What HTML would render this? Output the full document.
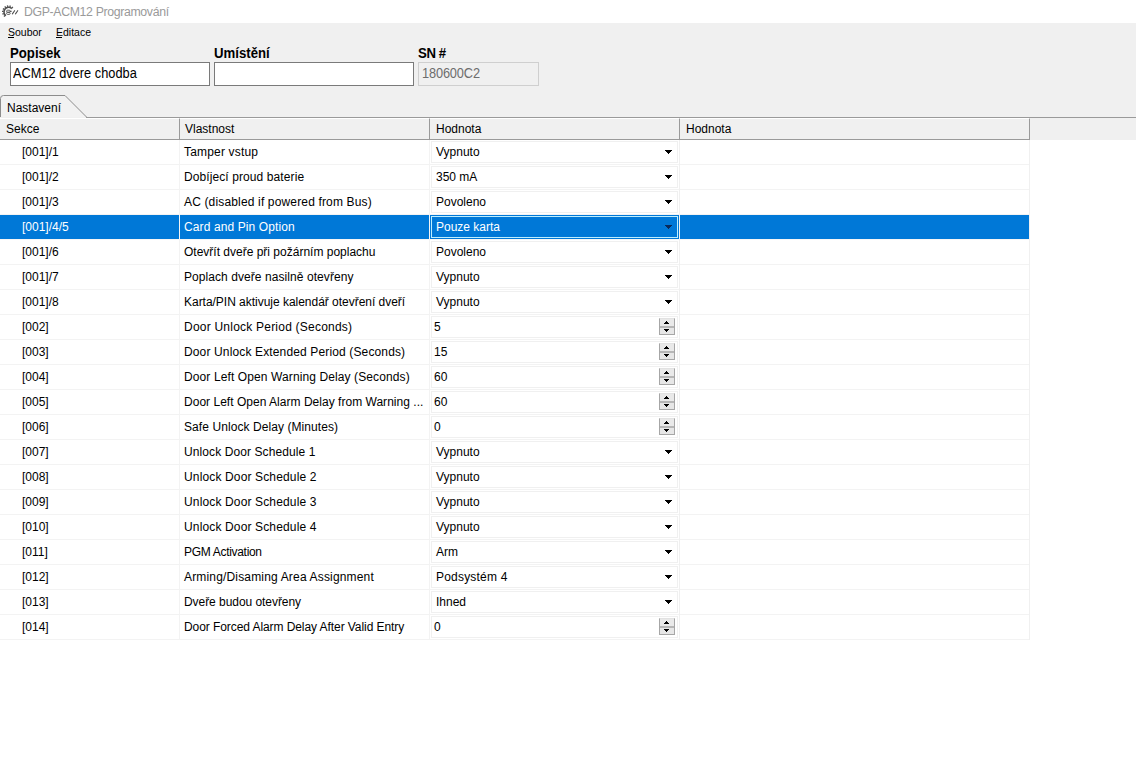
<!DOCTYPE html>
<html><head><meta charset="utf-8"><style>
*{margin:0;padding:0;box-sizing:border-box}
html,body{width:1136px;height:783px;overflow:hidden;background:#fff;font-family:"Liberation Sans",sans-serif;font-size:12px;color:#000;position:relative}
span{position:absolute;white-space:nowrap;line-height:14px}
i{position:absolute;display:block}
.title{position:absolute;left:0;top:0;width:1136px;height:23px;background:#fff}
.logo{position:absolute;left:0;top:0}
.ttxt{left:24px;top:5px;font-size:12.3px;letter-spacing:-0.35px;color:#9a9a9a}
.band{position:absolute;left:0;top:23px;width:1136px;height:95px;background:#f0f0f0}
.mi{top:25px;font-size:10.5px}
.mi u{text-decoration:none}
.ul{position:absolute;top:37px;height:1px;background:#000}
.m1{left:8px}.m2{left:56px}
.lbl{top:46px;font-size:13.2px;font-weight:bold;transform:scaleY(1.1);transform-origin:0 0}
.inp{position:absolute;top:62px;height:24px;background:#fff;border:1px solid #7a7a7a}
.inp span{left:2px;top:3px;font-size:12.8px;transform:scaleY(1.08);transform-origin:0 0}
.inp.dis{background:#f0f0f0;border-color:#cfcfcf;color:#6d6d6d}
.inp.dis span{left:3px;letter-spacing:-0.15px}
.tab{position:absolute;left:0;top:95px}
.tabt{left:7px;top:101px;font-size:12px}
.hdr{position:absolute;left:0;top:117px;width:1136px;height:23px;background:#f0f0f0}
.hline{position:absolute;left:86px;top:117px;width:1050px;height:1px;background:#9a9a9a}
.hc{position:absolute;top:118px;height:22px;border-bottom:1px solid #9a9a9a;border-right:1px solid #9a9a9a;border-top:1px solid #fff}
.hc span{top:3px}
.row{position:absolute;left:0;width:1030px;height:25px;background:#fff;border-bottom:1px solid #f3f3f3}
.row::after{content:"";position:absolute;left:179px;top:0;width:851px;height:25px;background:linear-gradient(90deg,#f3f3f3 0,#f3f3f3 1px,transparent 1px,transparent 250px,#f3f3f3 250px,#f3f3f3 251px,transparent 251px,transparent 500px,#f0f0f0 500px,#f0f0f0 501px,transparent 501px,transparent 850px,#f0f0f0 850px)}
.c1{left:22px;top:5px}
.c2{left:184px;top:5px}
.dd,.sp{position:absolute;left:431px;top:1px;width:247px;height:22px;border:1px solid #f0f0f0}
.v{left:4px;top:3px}
.sp .v{left:2px}
.arr{position:absolute;left:665px;top:10px;fill:#000}
.spb{position:absolute;left:659px;top:3px;width:16px;height:17px;background:linear-gradient(#e9e9e9 0,#e9e9e9 7px,#b6b6b6 7px,#b6b6b6 9px,#e6e6e6 9px);border:1px solid #a6a6a6;border-top-color:#e2e2e2}
.spa{position:absolute;left:664px;top:6px;fill:#000}
.row.sel{background:#0078d7;color:#fff;border-bottom-color:#f6f6f6}
.row.sel .dd{border-color:#bdeeff}
.row.sel .arr{fill:#0a2a5a}

</style></head><body>
<div class="title"><svg class="logo" width="22" height="22" viewBox="0 0 22 22"><g fill="none" stroke="#505050">
<path d="M11.85 8.65 A4.6 4.6 0 1 0 5.96 15.67" stroke-width="1.6"/>
<path d="M11.81 8.07L12.84 6.84M9.89 7.07L10.31 5.52M7.73 6.98L7.45 5.40M5.73 7.80L4.81 6.49M4.27 9.40L2.88 8.60M3.62 11.46L2.03 11.32M3.90 13.61L2.40 14.16M5.06 15.44L3.93 16.57" stroke-width="1.3"/>
<rect x="6.6" y="10.2" width="3.6" height="2.1" rx="1" stroke-width="0.9"/>
<rect x="6.6" y="12.3" width="3.6" height="2.1" rx="1" stroke-width="0.9"/>
<path d="M10.4 11.4 L11.3 11.2 M12.4 13.9 L14.6 10.7 M15.5 13.9 L17.7 10.7" stroke-width="1.1" stroke-linecap="round"/>
</g></svg><span class="ttxt">DGP-ACM12 Programování</span></div>
<div class="band"></div>
<span class="mi m1"><u>S</u>oubor</span><span class="mi m2"><u>E</u>ditace</span><i class="ul" style="left:8px;width:6px"></i><i class="ul" style="left:56px;width:6px"></i>
<span class="lbl" style="left:10px">Popisek</span>
<span class="lbl" style="left:214px">Umístění</span>
<span class="lbl" style="left:418px;letter-spacing:-0.4px">SN #</span>
<div class="inp" style="left:10px;width:200px"><span>ACM12 dvere chodba</span></div>
<div class="inp" style="left:214px;width:200px"></div>
<div class="inp dis" style="left:418px;width:121px"><span>180600C2</span></div>
<svg class="tab" width="90" height="24" viewBox="0 0 90 24"><path d="M0.5 22.5 V3.5 Q0.5 0.5 3.5 0.5 H65 L87 22.5" fill="#f2f2f2" stroke="#8c8c8c" stroke-width="1"/></svg>
<span class="tabt">Nastavení</span>
<div class="hdr"></div><div class="hline"></div>
<div class="hc" style="left:0;width:180px"><span style="left:6px">Sekce</span></div>
<div class="hc" style="left:180px;width:250px"><span style="left:5px">Vlastnost</span></div>
<div class="hc" style="left:430px;width:250px"><span style="left:6px">Hodnota</span></div>
<div class="hc" style="left:680px;width:350px"><span style="left:6px">Hodnota</span></div>
<div class="row" style="top:140px"><span class="c1">[001]/1</span><span class="c2" style="letter-spacing:0.182px">Tamper vstup</span><div class="dd"><span class="v">Vypnuto</span></div><svg class="arr" width="7" height="4" viewBox="0 0 7 4" shape-rendering="crispEdges"><path d="M0 0h7v1h-1v1h-1v1h-1v1h-1v-1h-1v-1h-1v-1h-1z"/></svg></div><div class="row" style="top:165px"><span class="c1">[001]/2</span><span class="c2" style="letter-spacing:0.095px">Dobíjecí proud baterie</span><div class="dd"><span class="v">350 mA</span></div><svg class="arr" width="7" height="4" viewBox="0 0 7 4" shape-rendering="crispEdges"><path d="M0 0h7v1h-1v1h-1v1h-1v1h-1v-1h-1v-1h-1v-1h-1z"/></svg></div><div class="row" style="top:190px"><span class="c1">[001]/3</span><span class="c2" style="letter-spacing:0.156px">AC (disabled if powered from Bus)</span><div class="dd"><span class="v">Povoleno</span></div><svg class="arr" width="7" height="4" viewBox="0 0 7 4" shape-rendering="crispEdges"><path d="M0 0h7v1h-1v1h-1v1h-1v1h-1v-1h-1v-1h-1v-1h-1z"/></svg></div><div class="row sel" style="top:215px"><span class="c1">[001]/4/5</span><span class="c2" style="letter-spacing:0.111px">Card and Pin Option</span><div class="dd"><span class="v">Pouze karta</span></div><svg class="arr" width="7" height="4" viewBox="0 0 7 4" shape-rendering="crispEdges"><path d="M0 0h7v1h-1v1h-1v1h-1v1h-1v-1h-1v-1h-1v-1h-1z"/></svg></div><div class="row" style="top:240px"><span class="c1">[001]/6</span><span class="c2" style="letter-spacing:0.000px">Otevřít dveře při požárním poplachu</span><div class="dd"><span class="v">Povoleno</span></div><svg class="arr" width="7" height="4" viewBox="0 0 7 4" shape-rendering="crispEdges"><path d="M0 0h7v1h-1v1h-1v1h-1v1h-1v-1h-1v-1h-1v-1h-1z"/></svg></div><div class="row" style="top:265px"><span class="c1">[001]/7</span><span class="c2" style="letter-spacing:0.069px">Poplach dveře nasilně otevřeny</span><div class="dd"><span class="v">Vypnuto</span></div><svg class="arr" width="7" height="4" viewBox="0 0 7 4" shape-rendering="crispEdges"><path d="M0 0h7v1h-1v1h-1v1h-1v1h-1v-1h-1v-1h-1v-1h-1z"/></svg></div><div class="row" style="top:290px"><span class="c1">[001]/8</span><span class="c2" style="letter-spacing:-0.024px">Karta/PIN aktivuje kalendář otevření dveří</span><div class="dd"><span class="v">Vypnuto</span></div><svg class="arr" width="7" height="4" viewBox="0 0 7 4" shape-rendering="crispEdges"><path d="M0 0h7v1h-1v1h-1v1h-1v1h-1v-1h-1v-1h-1v-1h-1z"/></svg></div><div class="row" style="top:315px"><span class="c1">[002]</span><span class="c2" style="letter-spacing:0.222px">Door Unlock Period (Seconds)</span><div class="sp"><span class="v">5</span></div><div class="spb"></div><svg class="spa" width="5" height="11" viewBox="0 0 5 11" shape-rendering="crispEdges"><path d="M2 0h1v1h1v1h1v1h-5v-1h1v-1h1z M0 8h5v1h-1v1h-1v1h-1v-1h-1v-1h-1z"/></svg></div><div class="row" style="top:340px"><span class="c1">[003]</span><span class="c2" style="letter-spacing:0.139px">Door Unlock Extended Period (Seconds)</span><div class="sp"><span class="v">15</span></div><div class="spb"></div><svg class="spa" width="5" height="11" viewBox="0 0 5 11" shape-rendering="crispEdges"><path d="M2 0h1v1h1v1h1v1h-5v-1h1v-1h1z M0 8h5v1h-1v1h-1v1h-1v-1h-1v-1h-1z"/></svg></div><div class="row" style="top:365px"><span class="c1">[004]</span><span class="c2" style="letter-spacing:0.108px">Door Left Open Warning Delay (Seconds)</span><div class="sp"><span class="v">60</span></div><div class="spb"></div><svg class="spa" width="5" height="11" viewBox="0 0 5 11" shape-rendering="crispEdges"><path d="M2 0h1v1h1v1h1v1h-5v-1h1v-1h1z M0 8h5v1h-1v1h-1v1h-1v-1h-1v-1h-1z"/></svg></div><div class="row" style="top:390px"><span class="c1">[005]</span><span class="c2" style="letter-spacing:0.024px">Door Left Open Alarm Delay from Warning ...</span><div class="sp"><span class="v">60</span></div><div class="spb"></div><svg class="spa" width="5" height="11" viewBox="0 0 5 11" shape-rendering="crispEdges"><path d="M2 0h1v1h1v1h1v1h-5v-1h1v-1h1z M0 8h5v1h-1v1h-1v1h-1v-1h-1v-1h-1z"/></svg></div><div class="row" style="top:415px"><span class="c1">[006]</span><span class="c2" style="letter-spacing:0.077px">Safe Unlock Delay (Minutes)</span><div class="sp"><span class="v">0</span></div><div class="spb"></div><svg class="spa" width="5" height="11" viewBox="0 0 5 11" shape-rendering="crispEdges"><path d="M2 0h1v1h1v1h1v1h-5v-1h1v-1h1z M0 8h5v1h-1v1h-1v1h-1v-1h-1v-1h-1z"/></svg></div><div class="row" style="top:440px"><span class="c1">[007]</span><span class="c2" style="letter-spacing:0.095px">Unlock Door Schedule 1</span><div class="dd"><span class="v">Vypnuto</span></div><svg class="arr" width="7" height="4" viewBox="0 0 7 4" shape-rendering="crispEdges"><path d="M0 0h7v1h-1v1h-1v1h-1v1h-1v-1h-1v-1h-1v-1h-1z"/></svg></div><div class="row" style="top:465px"><span class="c1">[008]</span><span class="c2" style="letter-spacing:0.143px">Unlock Door Schedule 2</span><div class="dd"><span class="v">Vypnuto</span></div><svg class="arr" width="7" height="4" viewBox="0 0 7 4" shape-rendering="crispEdges"><path d="M0 0h7v1h-1v1h-1v1h-1v1h-1v-1h-1v-1h-1v-1h-1z"/></svg></div><div class="row" style="top:490px"><span class="c1">[009]</span><span class="c2" style="letter-spacing:0.143px">Unlock Door Schedule 3</span><div class="dd"><span class="v">Vypnuto</span></div><svg class="arr" width="7" height="4" viewBox="0 0 7 4" shape-rendering="crispEdges"><path d="M0 0h7v1h-1v1h-1v1h-1v1h-1v-1h-1v-1h-1v-1h-1z"/></svg></div><div class="row" style="top:515px"><span class="c1">[010]</span><span class="c2" style="letter-spacing:0.143px">Unlock Door Schedule 4</span><div class="dd"><span class="v">Vypnuto</span></div><svg class="arr" width="7" height="4" viewBox="0 0 7 4" shape-rendering="crispEdges"><path d="M0 0h7v1h-1v1h-1v1h-1v1h-1v-1h-1v-1h-1v-1h-1z"/></svg></div><div class="row" style="top:540px"><span class="c1">[011]</span><span class="c2" style="letter-spacing:-0.308px">PGM Activation</span><div class="dd"><span class="v">Arm</span></div><svg class="arr" width="7" height="4" viewBox="0 0 7 4" shape-rendering="crispEdges"><path d="M0 0h7v1h-1v1h-1v1h-1v1h-1v-1h-1v-1h-1v-1h-1z"/></svg></div><div class="row" style="top:565px"><span class="c1">[012]</span><span class="c2" style="letter-spacing:0.167px">Arming/Disaming Area Assignment</span><div class="dd"><span class="v" style="letter-spacing:0.2px">Podsystém 4</span></div><svg class="arr" width="7" height="4" viewBox="0 0 7 4" shape-rendering="crispEdges"><path d="M0 0h7v1h-1v1h-1v1h-1v1h-1v-1h-1v-1h-1v-1h-1z"/></svg></div><div class="row" style="top:590px"><span class="c1">[013]</span><span class="c2" style="letter-spacing:-0.053px">Dveře budou otevřeny</span><div class="dd"><span class="v">Ihned</span></div><svg class="arr" width="7" height="4" viewBox="0 0 7 4" shape-rendering="crispEdges"><path d="M0 0h7v1h-1v1h-1v1h-1v1h-1v-1h-1v-1h-1v-1h-1z"/></svg></div><div class="row" style="top:615px"><span class="c1">[014]</span><span class="c2" style="letter-spacing:-0.075px">Door Forced Alarm Delay After Valid Entry</span><div class="sp"><span class="v">0</span></div><div class="spb"></div><svg class="spa" width="5" height="11" viewBox="0 0 5 11" shape-rendering="crispEdges"><path d="M2 0h1v1h1v1h1v1h-5v-1h1v-1h1z M0 8h5v1h-1v1h-1v1h-1v-1h-1v-1h-1z"/></svg></div>
</body></html>
